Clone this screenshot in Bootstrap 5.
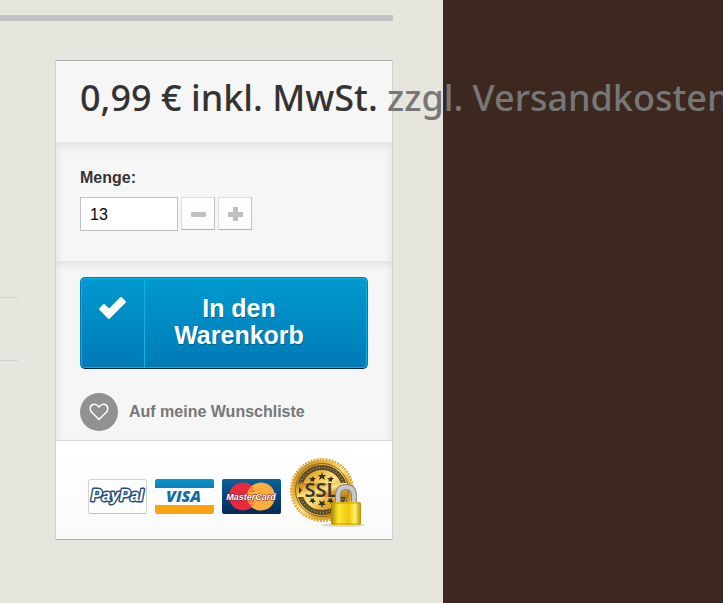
<!DOCTYPE html>
<html lang="de">
<head>
<meta charset="utf-8">
<meta name="viewport" content="width=device-width, initial-scale=1">
<title>In den Warenkorb</title>
<link href="https://cdn.jsdelivr.net/npm/bootstrap@5.3.0/dist/css/bootstrap.min.css" rel="stylesheet">
<style>
body { background: #3c281e; color: #333; font: 16px/20px "Liberation Sans", Arial, sans-serif; overflow-x: hidden; }
.page-sheet { background: #e6e6de; margin-right: 280px; padding: 15px 50px 63px 0; }
.top-rule { height: 6px; background: #c3c3c3; margin-bottom: 39px; }
.product-row { gap: 37px; }
.facts { flex: 0 0 18px; }
.facts div { border-bottom: 1px solid #d2d2d5; height: 63px; }
.facts div:first-child { height: 238px; }
.buy-box { background: #f6f6f6; border: 1px solid #d2d0d0; border-top-color: #b0b0b0; border-bottom-color: #b0b0b0; min-width: 0; }
.price { font: 500 36px/44px "Noto Sans", "Open Sans", sans-serif; padding: 15px 24px 22px; }
.price span { color: #777; }
.shade { box-shadow: inset 0 6px 10px -2px #e2e2e2, inset 6px 0 6px -4px #eeeeee, inset -6px 0 6px -4px #eeeeee; }
.amount { padding: 26px 24px 30px; }
.amount label { margin-bottom: 9px; }
.stepper { gap: 3px; }
.qty { width: 98px; height: 34px; border: 1px solid #bdc2c9; padding: 2px 9px 0; color: #000; background: #fff; }
.step { width: 34px; height: 33px; border: 1px solid #dedcdc; border-right-color: #c1bfbf; border-bottom-color: #b5b4b4; background: linear-gradient(#fff, #fbfbfb); }
.actions { padding: 16px 24px 9px; }
.cart-btn { border: 1px solid #0079b6; border-bottom-color: #012740; border-radius: 5px; background: linear-gradient(#009ad0, #007ab7); box-shadow: inset 0 0 0 1px #06b2e6; color: #fff; font-weight: 700; font-size: 25px; line-height: 27px; text-shadow: 1px 1px rgba(0,0,0,.25); min-height: 92px; }
.cart-btn .tick { flex: 0 0 64px; border-right: 1px solid #06b2e6; padding-top: 18px; }
.cart-btn .words { padding: 17px 34px 18px 0; }
.wish { color: #777; margin-top: 24px; gap: 11px; }
.wish-dot { width: 38px; height: 38px; background: #919191; }
.payments { background: linear-gradient(#fff, #fafafa); border-top: 1px solid #dcdcdc; padding: 16px 24px 10px 32px; gap: 8px; }
.pay-card { margin-top: 22px; }
svg { display: block; }
</style>
</head>
<body>
<main class="page-sheet min-vh-100">
  <div class="top-rule"></div>
  <div class="product-row d-flex align-items-start">
    <div class="facts"><div></div><div></div></div>
    <form class="buy-box flex-grow-1">
      <div class="price text-nowrap">0,99 € inkl. MwSt. <span>zzgl. Versandkosten</span></div>
      <div class="amount shade">
        <label for="qty" class="d-block fw-bold">Menge:</label>
        <div class="stepper d-flex">
          <input id="qty" class="qty" type="text" value="13">
          <button type="button" class="step p-0 d-flex align-items-center justify-content-center" aria-label="Weniger"><svg width="16" height="16"><rect x="1" y="6" width="15" height="5" rx="1" fill="#c0c0c0"/></svg></button>
          <button type="button" class="step p-0 d-flex align-items-center justify-content-center" aria-label="Mehr"><svg width="16" height="16"><path d="M6 1h5v5h5v5h-5v4H6v-4H1V6h5z" fill="#c0c0c0"/></svg></button>
        </div>
      </div>
      <div class="actions shade">
        <button type="submit" class="cart-btn d-flex w-100 p-0">
          <span class="tick d-flex justify-content-center align-self-stretch"><svg width="30" height="26" viewBox="0 0 30 26"><path d="M2 13l4-4 5 5L23 2l4 4-16 16z" transform="translate(1 1)" fill="#00547f" opacity=".5" stroke="#00547f" stroke-linejoin="round"/><path d="M2 13l4-4 5 5L23 2l4 4-16 16z" fill="#fff" stroke="#fff" stroke-width="2" stroke-linejoin="round"/></svg></span>
          <span class="words flex-grow-1">In den<br>Warenkorb</span>
        </button>
        <a href="#" class="wish d-flex align-items-center fw-bold text-decoration-none"><span class="wish-dot rounded-circle d-flex align-items-center justify-content-center"><svg width="20" height="18" viewBox="0 0 20 18"><path d="M10 16.500L2.500 9C.5 6.500.5 1.500 5.300 1.200 8 1.100 9.200 3 10 4c.8-1 2-2.900 4.700-2.800C19.500 1.500 19.500 6.500 17.500 9z" fill="none" stroke="#fff" stroke-width="1.500" stroke-linejoin="round"/></svg></span>Auf meine Wunschliste</a>
      </div>
      <div class="payments d-flex">
        <svg class="pay-card flex-shrink-0" width="59" height="35" viewBox="0 0 59 35" role="img" aria-label="PayPal"><rect x=".5" y=".5" width="58" height="34" rx="2" fill="#fff" stroke="#ced5d9"/><path d="M1 34.500h57" stroke="#b3c2c5"/><text x="3" y="22" font-family="Liberation Sans, sans-serif" font-size="16" font-weight="700" font-style="italic" fill="#fff" stroke="#24507f" stroke-width="3" paint-order="stroke" stroke-linejoin="round">PayPal</text></svg>
        <svg class="pay-card flex-shrink-0" width="59" height="35" viewBox="0 0 59 35" role="img" aria-label="VISA"><defs><linearGradient id="vb" x2="0" y2="1"><stop stop-color="#0797ce"/><stop offset="1" stop-color="#087fb8"/></linearGradient></defs><rect width="59" height="35" rx="2" fill="#fff"/><path d="M0 9V2q0-2 2-2h55q2 0 2 2v7z" fill="url(#vb)"/><path d="M0 26h59v7q0 2-2 2H2q-2 0-2-2z" fill="#fca311"/><text x="11" y="23" font-family="Open Sans, sans-serif" font-size="16" font-weight="800" font-style="italic" fill="#136ba8">VISA</text></svg>
        <svg class="pay-card flex-shrink-0" width="59" height="35" viewBox="0 0 59 35" role="img" aria-label="MasterCard"><defs><linearGradient id="mb" x2="0" y2="1"><stop stop-color="#07639b"/><stop offset="1" stop-color="#022858"/></linearGradient></defs><rect width="59" height="35" rx="2" fill="url(#mb)"/><circle cx="21" cy="17.500" r="14" fill="#e82940"/><circle cx="39" cy="17.500" r="14" fill="#fdad3b"/><path d="M28 9h4M27 12h6M26 23h7M27 26h5" stroke="#e9512f"/><text x="29" y="21" text-anchor="middle" font-family="Liberation Sans, sans-serif" font-size="9" font-weight="700" font-style="italic" fill="#fff" stroke="#6b2030" stroke-width="1" paint-order="stroke">MasterCard</text></svg>
        <svg class="flex-shrink-0" width="78" height="72" viewBox="0 0 78 72" role="img" aria-label="SSL"><defs><linearGradient id="gold" x2="1" y2="1"><stop stop-color="#b77a10"/><stop offset=".35" stop-color="#edbb43"/><stop offset=".5" stop-color="#ffe58a"/><stop offset=".65" stop-color="#e6ad2f"/><stop offset="1" stop-color="#b77a10"/></linearGradient><linearGradient id="lock"><stop stop-color="#a98500"/><stop offset=".25" stop-color="#ffe72e"/><stop offset=".6" stop-color="#efc60b"/><stop offset=".8" stop-color="#fff36a"/><stop offset="1" stop-color="#bb8b00"/></linearGradient></defs><ellipse cx="54" cy="68" rx="22" ry="2" fill="#d9d9d9"/><circle cx="33" cy="33" r="30.500" fill="none" stroke="#dca83a" stroke-width="3" stroke-dasharray="2 1"/><circle cx="33" cy="33" r="30" fill="url(#gold)"/><circle cx="33" cy="33" r="22.500" fill="none" stroke="#54482c" stroke-width="5"/><circle cx="33" cy="33" r="22.500" fill="none" stroke="#bd9037" stroke-width="2" stroke-dasharray="1 2"/><circle cx="33" cy="33" r="26.500" fill="none" stroke="#8a641f"/><path id="star" d="M33 15l1 3h3l-2 2 1 3-3-2-3 2 1-3-2-2h3zM24 19l1 2h2l-2 2v2l-2-1-2 1 1-2-2-2h3zM42 19l1 2h2l-2 2v2l-2-1-2 1 1-2-2-2h3z" fill="#383127"/><use href="#star" transform="matrix(1 0 0 -1 0 66)"/><path d="M8 26h50v14H8z" fill="url(#gold)"/><path d="M10 30l3 3-3 4z" fill="#383127"/><text x="32" y="40" text-anchor="middle" font-family="Noto Sans, sans-serif" font-size="20" font-weight="600" fill="#383838">SSL</text><path d="M49 49V39q0-9 8-9t8 9v10" fill="none" stroke="#858585" stroke-width="6"/><path d="M49 49V39q0-9 8-9t8 9v10" fill="none" stroke="#c8c8c8" stroke-width="4"/><rect x="42" y="45" width="30" height="23" rx="2" fill="url(#lock)"/><path d="M43 46h28M43 67h28" stroke="#c49b09"/></svg>
      </div>
    </form>
  </div>
</main>
<script src="https://cdn.jsdelivr.net/npm/bootstrap@5.3.0/dist/js/bootstrap.bundle.min.js"></script>
</body>
</html>
